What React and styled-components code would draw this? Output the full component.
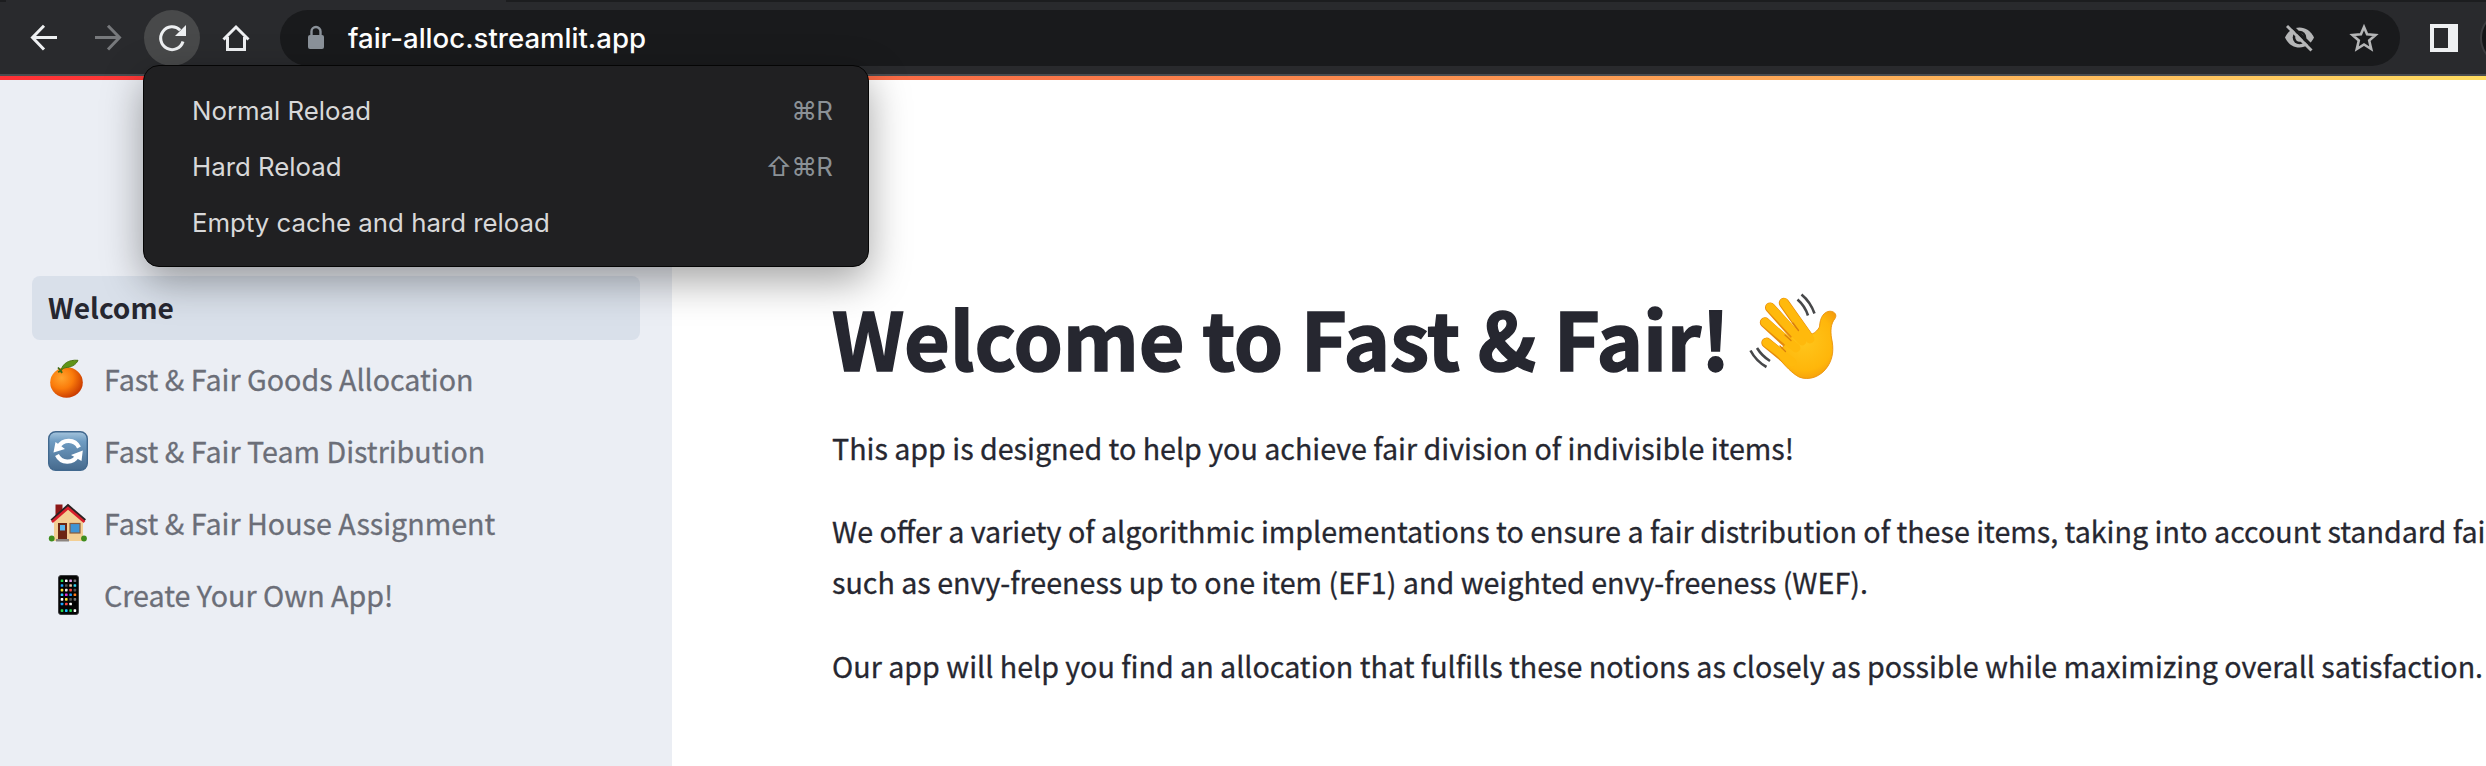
import React from "react";
import styled, { createGlobalStyle } from "styled-components";

const GlobalStyle = createGlobalStyle`
  html, body { margin: 0; padding: 0; background: #fff; }
  body { overflow: hidden; }
  * { box-sizing: border-box; }
`;

const uiFont = `Inter, "Liberation Sans", sans-serif`;
const pageFont = `"Noto Sans CJK JP", "Noto Sans", sans-serif`;

const Screen = styled.div`
  position: relative;
  display: flex;
  flex-direction: column;
  width: 2486px;
  height: 766px;
  overflow: hidden;
`;

const TabStrip = styled.div`
  display: flex;
  justify-content: space-between;
  height: 2px;
  background: #292a2d;
`;
const TabGap = styled.div`
  width: ${(p) => p.$width}px;
  height: 2px;
  background: #1c1d1f;
`;

const Toolbar = styled.header`
  display: flex;
  align-items: center;
  gap: 8px;
  height: 74px;
  padding-left: 16px;
  background: #292a2d;
  border-bottom: 2px solid #4a4c50;
`;

const ToolButton = styled.button`
  flex: none;
  display: grid;
  place-items: center;
  width: 56px;
  height: 56px;
  padding: 0;
  border: 0;
  border-radius: 50%;
  color: ${(p) => (p.$dim ? "#77797c" : "#eef0f2")};
  background: ${(p) => (p.$active ? "#48494a" : "transparent")};
`;

const AddressBar = styled.div`
  flex: none;
  display: flex;
  align-items: center;
  width: 2120px;
  height: 56px;
  margin: 0 8px;
  padding: 0 4px 0 20px;
  border-radius: 28px;
  background: #191a1c;
  color: #b5b6b7;
`;
const Url = styled.span`
  flex: 1;
  margin-left: 16px;
  font: 500 27.6px/56px ${uiFont};
  color: #fff;
`;
const AddressIcon = styled.span`
  display: grid;
  place-items: center;
  width: 64px;
  height: 56px;
`;
const Avatar = styled.div`
  flex: none;
  width: 56px;
  height: 56px;
  border: 2px solid #3b3c3f;
  border-radius: 50%;
  background: #141517;
`;

const Decoration = styled.div`
  height: 4px;
  background: linear-gradient(90deg, #ff3035 0px, #f96a45 880px, #ffc45f 2200px, #ffdc60 2486px);
`;

const Body = styled.div`
  flex: 1;
  display: flex;
  min-height: 0;
`;

const Sidebar = styled.nav`
  flex: none;
  display: flex;
  flex-direction: column;
  gap: 8px;
  width: 672px;
  padding: 196px 32px 0;
  background: #ebeef4;
`;
const NavItem = styled.a`
  display: flex;
  align-items: center;
  gap: 16px;
  height: 64px;
  padding: 0 16px;
  border-radius: 8px;
  background: ${(p) => (p.$selected ? "#d9e0ea" : "transparent")};
  color: ${(p) => (p.$selected ? "#262730" : "#6b6e78")};
  font: ${(p) => (p.$selected ? "700 28.1px" : "400 28.65px")} / 60px ${pageFont};
  -webkit-text-stroke: ${(p) => (p.$selected ? 0 : 0.3)}px currentColor;
  white-space: nowrap;
`;
const NavLabel = styled.span`
  padding-bottom: 3px;
`;
const NavIcon = styled.svg`
  flex: none;
  width: 40px;
  height: 44px;
`;

const Main = styled.main`
  flex: 1;
  min-width: 0;
  padding: 204px 0 0 160px;
  color: #262730;
  font: 400 28.65px/51.2px ${pageFont};
  -webkit-text-stroke: 0.3px currentColor;
  white-space: nowrap;
`;
const Title = styled.h1`
  display: flex;
  align-items: center;
  gap: 10px;
  height: 106px;
  margin: 0 0 32px;
  font: 700 79px/104px ${pageFont};
  letter-spacing: -0.2px;
  -webkit-text-stroke: 1.5px currentColor;
`;
const WaveIcon = styled.svg`
  flex: none;
  width: 104px;
  height: 104px;
`;
const Paragraph = styled.p`
  margin: 0 0 32px;
`;
const Line = styled.span`
  display: block;
`;

const Menu = styled.ul`
  position: absolute;
  left: 143px;
  top: 65px;
  width: 726px;
  height: 202px;
  margin: 0;
  padding: 17px 36px 0 48px;
  list-style: none;
  border: 1px solid #050505;
  border-radius: 16px;
  background: #202022;
  box-shadow: 0 14px 40px rgba(0, 0, 0, 0.36);
`;
const MenuItem = styled.li`
  display: flex;
  justify-content: space-between;
  height: 56px;
  font: 400 25.8px/56px ${uiFont};
  color: #d8d8d9;
`;
const Shortcut = styled.kbd`
  font: inherit;
  letter-spacing: -0.8px;
  color: #8b9196;
`;

const Glyph = ({ children, size = 32 }) => (
  <svg width={size} height={size} viewBox="0 0 32 32" fill="none" stroke="currentColor" strokeWidth="3">
    {children}
  </svg>
);

const Orange = () => (
  <NavIcon viewBox="0 0 40 44">
    <defs>
      <radialGradient id="peel" cx="0.35" cy="0.35" r="0.7">
        <stop offset="0" stopColor="#ffa42e" />
        <stop offset="0.5" stopColor="#fb7c0b" />
        <stop offset="1" stopColor="#c93a00" />
      </radialGradient>
    </defs>
    <ellipse cx="18.5" cy="24.5" rx="16.3" ry="15.2" fill="url(#peel)" />
    <path d="M13 12.500C14.500 6 20 1.500 30 2.300C28 7 23 9.300 18 9.600 16 10 14.500 11 13 12.500z" fill="#5f9418" stroke="#4d7413" strokeWidth="1" />
    <path d="M10 9.500L13 13M13 13l-3 1M13 13l1 2" stroke="#3f6a12" strokeWidth="1.800" />
  </NavIcon>
);

const Swap = () => (
  <NavIcon viewBox="0 0 40 44">
    <defs>
      <linearGradient id="tile" x1="0" y1="0" x2="0" y2="1">
        <stop offset="0" stopColor="#a6c6de" />
        <stop offset="0.25" stopColor="#6f9cc2" />
        <stop offset="1" stopColor="#466a8d" />
      </linearGradient>
    </defs>
    <rect x="0.700" y="1.700" width="38.600" height="38.600" rx="7" fill="url(#tile)" stroke="#41688e" strokeWidth="1.400" />
    <path d="M31 17.500C27 9 15 8.500 10.500 17M9 25c4 8.500 16 9 20.500 0.500" fill="none" stroke="#fff" strokeWidth="4.200" />
    <path d="M5.500 22.500L7.500 12l9.500 7zM34.800 20.500L33.500 31 23 25z" fill="#fff" />
  </NavIcon>
);

const House = () => (
  <NavIcon viewBox="0 0 40 44">
    <rect x="7.500" y="2.500" width="7" height="13" fill="#8d1717" />
    <path d="M6 18L20 5l15 13v21H6z" fill="#f3cf94" />
    <path d="M3.500 18.500L20 3.800l17 14.700" fill="none" stroke="#2c2222" strokeWidth="3" />
    <path d="M4 20L20 6l16.500 14" fill="none" stroke="#d81f2c" strokeWidth="2.600" />
    <rect x="10" y="21" width="9" height="17" fill="#6c2513" />
    <rect x="12" y="23" width="5" height="5.500" fill="#59b5ec" />
    <rect x="22" y="21.500" width="10" height="9.500" fill="#3f94d4" stroke="#8b5a39" strokeWidth="1.200" />
    <circle cx="3.700" cy="36.500" r="2.900" fill="#3f8d1d" />
    <circle cx="36" cy="36.500" r="2.900" fill="#3f8d1d" />
    <rect x="8" y="37" width="13" height="2.500" fill="#8c8580" />
  </NavIcon>
);

const appColors = [
  "#26d94b", "#ffffff", "#e39af0", "#777777",
  "#1aa5ff", "#555555", "#f0c9a0", "#35d3f0",
  "#ffe53b", "#e8e8e8", "#ff4545", "#555555",
  "#30cfff", "#e034e0", "#1a9bff", "#ff7a1a",
  "#ffffff", "#ffe53b", "#555555", "#777777",
  "#1aa5ff", "#ff4545", "#ffffff", "#000000",
  "#26d94b", "#1ac5ff", "#26d94b", "#ffffff",
];
const Phone = () => (
  <NavIcon viewBox="0 0 40 44">
    <rect x="10.500" y="1.500" width="20" height="39" rx="2.500" fill="#050505" stroke="#3c3d40" strokeWidth="1" />
    {appColors.map((c, i) => (
      <rect key={i} x={12.7 + (i % 4) * 4.3} y={i > 23 ? 35.3 : 5.5 + Math.floor(i / 4) * 4.65} width="2.600" height="2.600" rx="0.600" fill={c} />
    ))}
  </NavIcon>
);

const Wave = () => (
  <WaveIcon viewBox="0 0 104 104" fill="none">
    <defs>
      <radialGradient id="skin" gradientUnits="userSpaceOnUse" cx="64" cy="56" r="42">
        <stop offset="0" stopColor="#ffc61c" />
        <stop offset="0.700" stopColor="#ffb60a" />
        <stop offset="1" stopColor="#f39a0c" />
      </radialGradient>
    </defs>
    <g stroke="#e58a0c" strokeWidth="10.400" strokeLinecap="round">
      <path d="M26.500 57.800L50 77" />
      <path d="M25 37.500L54 64" />
      <path d="M30.200 22.600L60 56" />
      <path d="M44 18L68 52" />
    </g>
    <path
      d="M58 44L66 47C70 52 76 48 79.500 42 80 32 84 26.500 90 26.200 95.500 26.500 97 30.500 95 33.500 90.500 39 90.500 46 91.500 53 94 64 93 73 88 81 81 92 69 96 59 92 52 88 46 82 36 70Z"
      fill="url(#skin)"
      stroke="#ea920c"
      strokeWidth="0.900"
    />
    <g stroke="#ffb90c" strokeWidth="8.800" strokeLinecap="round">
      <path d="M26.500 57.500L52 77" />
      <path d="M25 37.200L56 63" />
      <path d="M30.200 22.300L62 56" />
      <path d="M44 17.700L70 54" />
    </g>
    <path d="M45.500 66.500L40 61M51 55.500L45 50M58.500 45.500L53 38" stroke="#d97f0c" strokeWidth="1.300" strokeLinecap="round" />
    <path d="M57.500 14.500Q65 21 68 30.500M61.500 9.500Q70.500 17 74.500 28.500M10.500 65.500Q16 76 26.500 82M17 63Q22 71 30 76" stroke="#47484a" strokeWidth="2.600" />
  </WaveIcon>
);

const navItems = [
  { icon: Orange, label: "Fast & Fair Goods Allocation" },
  { icon: Swap, label: "Fast & Fair Team Distribution" },
  { icon: House, label: "Fast & Fair House Assignment" },
  { icon: Phone, label: "Create Your Own App!" },
];

export default function App() {
  return (
    <Screen>
      <GlobalStyle />
      <TabStrip>
        <TabGap $width={6} />
        <TabGap $width={1980} />
      </TabStrip>
      <Toolbar>
        <ToolButton aria-label="Back">
          <Glyph><path d="M29 15.500H4.500M16 3.700L4.500 15.500 16 27.500" /></Glyph>
        </ToolButton>
        <ToolButton aria-label="Forward" $dim>
          <Glyph><path d="M3 15.500H27.500M16 3.700L27.500 15.500 16 27.500" /></Glyph>
        </ToolButton>
        <ToolButton aria-label="Reload" $active>
          <Glyph>
            <path d="M24.200 8.200A11.400 11.400 0 1 0 27 19.500" />
            <path d="M30 3V14H19z" fill="currentColor" stroke="none" />
          </Glyph>
        </ToolButton>
        <ToolButton aria-label="Home">
          <Glyph><path d="M3.500 17.500L16 5 28.500 17.500M7.500 15V27.500H24.500V15" /></Glyph>
        </ToolButton>
        <AddressBar>
          <svg width="32" height="32" viewBox="0 0 32 32" fill="none">
            <path d="M11.500 14V9.500a4.500 4.500 0 0 1 9 0V14" stroke="#8b929a" strokeWidth="2.400" />
            <rect x="8" y="13" width="16" height="14" rx="2" fill="#8b929a" />
          </svg>
          <Url>fair-alloc.streamlit.app</Url>
          <AddressIcon>
            <svg width="32" height="32" viewBox="0 0 32 32" fill="none">
              <path d="M1 15.500C4 9 9.500 5.500 15.500 5.500S27 9 30 15.500C27 22 21.500 25.500 15.500 25.500S4 22 1 15.500z" fill="#b5b6b7" />
              <circle cx="15.500" cy="15.500" r="6.800" fill="#191a1c" />
              <circle cx="15.500" cy="15.500" r="4.200" fill="#b5b6b7" />
              <path d="M5.500 2L31 27.500" stroke="#191a1c" strokeWidth="3.500" />
              <path d="M3 4L27.500 28.500" stroke="#b5b6b7" strokeWidth="3" />
            </svg>
          </AddressIcon>
          <AddressIcon>
            <Glyph>
              <path strokeWidth="2.600" d="M16 5L19.100 12.300 27.500 13 21.200 18.500 23.200 27 16 22.500 8.800 27 10.800 18.500 4.500 13 12.900 12.300z" />
            </Glyph>
          </AddressIcon>
        </AddressBar>
        <ToolButton aria-label="Side panel">
          <Glyph>
            <path d="M2 2H30V30H2zM6 6V26H20V6z" fill="currentColor" fillRule="evenodd" stroke="none" />
          </Glyph>
        </ToolButton>
        <Avatar />
      </Toolbar>
      <Decoration />
      <Body>
        <Sidebar>
          <NavItem $selected><NavLabel>Welcome</NavLabel></NavItem>
          {navItems.map(({ icon: Icon, label }) => (
            <NavItem key={label}>
              <Icon />
              <NavLabel>{label}</NavLabel>
            </NavItem>
          ))}
        </Sidebar>
        <Main>
          <Title>
            Welcome to Fast &amp; Fair!
            <Wave />
          </Title>
          <Paragraph>
            <Line>This app is designed to help you achieve fair division of indivisible items!</Line>
          </Paragraph>
          <Paragraph>
            <Line>
              We offer a variety of algorithmic implementations to ensure a fair distribution of these items, taking into account standard fairness notions
            </Line>
            <Line>such as envy-freeness up to one item (EF1) and weighted envy-freeness (WEF).</Line>
          </Paragraph>
          <Paragraph>
            <Line>Our app will help you find an allocation that fulfills these notions as closely as possible while maximizing overall satisfaction.</Line>
          </Paragraph>
        </Main>
      </Body>
      <Menu>
        <MenuItem>Normal Reload<Shortcut>⌘R</Shortcut></MenuItem>
        <MenuItem>Hard Reload<Shortcut>⇧⌘R</Shortcut></MenuItem>
        <MenuItem>Empty cache and hard reload</MenuItem>
      </Menu>
    </Screen>
  );
}
